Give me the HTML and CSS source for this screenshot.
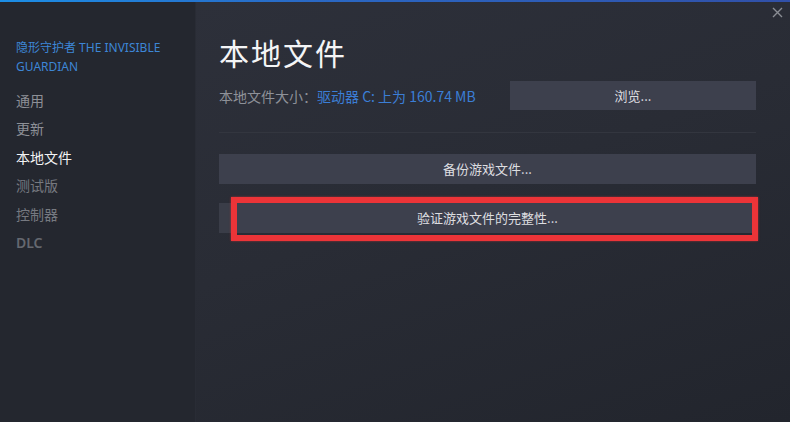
FILE: index.html
```html
<!DOCTYPE html>
<html lang="zh-CN">
<head>
<meta charset="utf-8">
<title>本地文件</title>
<link rel="stylesheet" href="styles.css">
</head>
<body>
<div class="topline"></div>
<div class="window">
  <aside class="sidebar">
    <div class="game-title">隐形守护者 THE INVISIBLE GUARDIAN</div>
    <nav class="nav">
      <div class="nav-item">通用</div>
      <div class="nav-item">更新</div>
      <div class="nav-item active">本地文件</div>
      <div class="nav-item dim">测试版</div>
      <div class="nav-item dim">控制器</div>
      <div class="nav-item dim latin">DLC</div>
    </nav>
  </aside>
  <main class="main">
    <div class="close" aria-label="关闭">
      <svg width="11" height="11" viewBox="0 0 11 11"><path d="M1 1L10 10M10 1L1 10" stroke="#8a8d94" stroke-width="1.4" fill="none"/></svg>
    </div>
    <h1 class="title">本地文件</h1>
    <div class="size-row">
      <div class="size-text"><span class="label">本地文件大小：</span><span class="value">驱动器 C: 上为 160.74 MB</span></div>
      <div class="btn browse">浏览...</div>
    </div>
    <div class="divider"></div>
    <div class="btn wide">备份游戏文件...</div>
    <div class="verify-wrap">
      <div class="btn wide verify">验证游戏文件的完整性...</div>
      <div class="highlight"></div>
    </div>
  </main>
</div>
</body>
</html>
```
FILE: styles.css
```css
html, body {
  margin: 0;
  padding: 0;
  width: 790px;
  height: 422px;
  overflow: hidden;
  background: #24272f;
  font-family: "Noto Sans CJK SC", "Noto Sans", sans-serif;
}
.topline {
  height: 2px;
  background: linear-gradient(90deg, #1c8ee6 0%, #2a68c4 40%, #3150a8 100%);
}
.window {
  display: flex;
  height: 420px;
}
.sidebar {
  width: 196px;
  flex: none;
  background: #24272f;
  box-sizing: border-box;
  padding: 36px 0 0 16px;
  border-right: 1px solid #292c35;
}
.game-title {
  color: #3d86d6;
  font-size: 12px;
  line-height: 19px;
  width: 160px;
  font-family: "Noto Sans", "Noto Sans CJK SC", sans-serif;
}
.nav {
  margin-top: 10px;
}
.nav-item {
  font-size: 14px;
  line-height: 28.4px;
  color: #8d9097;
}
.nav-item.active {
  color: #f2f3f4;
}
.nav-item.dim {
  color: #767980;
}
.nav-item.latin {
  font-family: "Noto Sans", sans-serif;
  font-weight: 600;
  color: #65686f;
  padding-top: 1px;
}
.main {
  flex: 1;
  position: relative;
  box-sizing: border-box;
  padding: 30px 34px 0 23px;
  background: linear-gradient(160deg, #2d303a 0%, #292c35 45%, #22252d 100%);
}
.close {
  position: absolute;
  top: 5px;
  right: 7px;
  width: 11px;
  height: 11px;
}
.close svg { display: block; }
.title {
  margin: 0;
  font-size: 30px;
  line-height: 40px;
  font-weight: 400;
  color: #f4f5f6;
  letter-spacing: 2px;
}
.size-row {
  display: flex;
  align-items: center;
  justify-content: space-between;
  margin-top: 9px;
}
.size-text {
  font-size: 14px;
}
.label { color: #8e9198; }
.value { color: #3b7ed6; }
.btn {
  background: #3d404d;
  color: #dddee0;
  font-size: 13px;
  height: 30px;
  line-height: 30px;
  text-align: center;
  box-sizing: border-box;
}
.browse {
  width: 246px;
  height: 29px;
  line-height: 29px;
}
.divider {
  height: 1px;
  background: #33363f;
  margin: 22px 0 21px;
}
.verify-wrap {
  position: relative;
  margin-top: 19px;
}
.verify {
  position: relative;
  z-index: 1;
}
.verify-wrap .verify {
  background: linear-gradient(90deg, #3a3d48 0 12px, #3d404d 12px);
}
.highlight {
  position: absolute;
  z-index: 2;
  left: 12px;
  top: -6px;
  right: -2px;
  bottom: -8px;
  border: 6px solid #ec3438;
  box-shadow: 0 0 2px rgba(236, 52, 56, 0.6);
}
```
